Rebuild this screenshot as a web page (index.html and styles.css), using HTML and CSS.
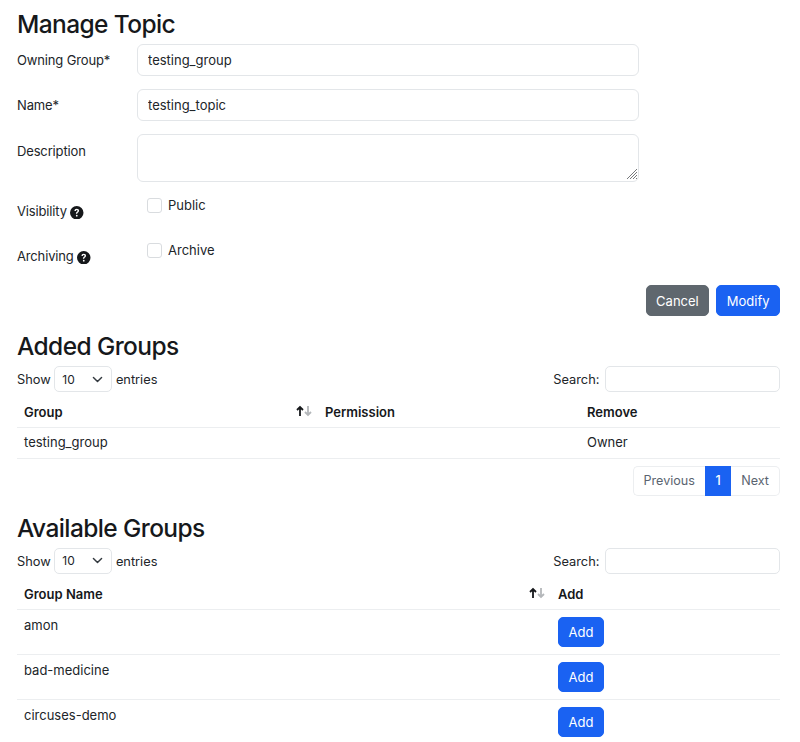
FILE: index.html
```html
<!DOCTYPE html>
<html lang="en">
<head>
<meta charset="UTF-8">
<title>Manage Topic</title>
<link rel="stylesheet" href="styles.css">
</head>
<body>
  <div class="container">
    <h3 class="title">Manage Topic</h3>
    <form class="topic-form">
      <div class="form-row">
        <label class="form-label">Owning Group*</label>
        <input class="form-control" type="text" value="testing_group">
      </div>
      <div class="form-row">
        <label class="form-label">Name*</label>
        <input class="form-control" type="text" value="testing_topic">
      </div>
      <div class="form-row">
        <label class="form-label label-desc">Description</label>
        <div class="textarea-wrap">
          <textarea class="form-control form-textarea"></textarea>
          <svg class="grip" viewBox="0 0 12 12"><path d="M11 1L1 11M11 4L4 11M11 7L7 11M11 10L10 11" stroke="#77797c" stroke-width="1" fill="none"/></svg>
        </div>
      </div>
      <div class="form-row check-row">
        <label class="form-label">Visibility
          <svg class="help" viewBox="0 0 16 16"><path d="M16 8A8 8 0 1 1 0 8a8 8 0 0 1 16 0zM5.300 5.800h1.600c.1-.7.500-1.100 1.100-1.100.6 0 1 .3 1 .9 0 .5-.2.7-.8 1.200-.8.500-1.200 1.100-1.200 2v.5h1.600v-.4c0-.6.2-.8.900-1.300.7-.5 1.200-1.100 1.200-2.100 0-1.500-1.200-2.300-2.700-2.300-1.600 0-2.700 1-2.700 2.600zM8 12.500a1.050 1.050 0 1 0 0-2.100 1.050 1.050 0 0 0 0 2.100z"/></svg>
        </label>
        <div class="check"><span class="checkbox"></span><span>Public</span></div>
      </div>
      <div class="form-row check-row">
        <label class="form-label">Archiving
          <svg class="help" viewBox="0 0 16 16"><path d="M16 8A8 8 0 1 1 0 8a8 8 0 0 1 16 0zM5.300 5.800h1.600c.1-.7.500-1.100 1.100-1.100.6 0 1 .3 1 .9 0 .5-.2.7-.8 1.200-.8.500-1.200 1.100-1.200 2v.5h1.600v-.4c0-.6.2-.8.900-1.300.7-.5 1.200-1.100 1.200-2.100 0-1.500-1.200-2.300-2.700-2.300-1.600 0-2.700 1-2.700 2.600zM8 12.500a1.050 1.050 0 1 0 0-2.100 1.050 1.050 0 0 0 0 2.100z"/></svg>
        </label>
        <div class="check"><span class="checkbox"></span><span>Archive</span></div>
      </div>
      <div class="form-actions">
        <button type="button" class="btn btn-secondary">Cancel</button>
        <button type="button" class="btn btn-primary">Modify</button>
      </div>
    </form>

    <h3 class="title section-title">Added Groups</h3>
    <div class="dt-top">
      <div class="dt-length">Show <span class="select">10<svg viewBox="0 0 16 16"><path d="M3 5.500l5 5 5-5" fill="none" stroke="#343a40" stroke-width="1.800" stroke-linecap="round" stroke-linejoin="round"/></svg></span> entries</div>
      <div class="dt-search">Search: <input class="search-input" type="text"></div>
    </div>
    <table class="table">
      <thead>
        <tr>
          <th class="col-group sortable">Group<svg class="sort" viewBox="0 0 16 12"><path class="sort-up" d="M4 11V2M1 5l3-3 3 3"/><path class="sort-down" d="M12 1v9M9 7l3 3 3-3"/></svg></th>
          <th class="col-perm">Permission</th>
          <th>Remove</th>
        </tr>
      </thead>
      <tbody>
        <tr><td>testing_group</td><td></td><td>Owner</td></tr>
      </tbody>
    </table>
    <div class="pagination">
      <span class="page-link page-prev">Previous</span>
      <span class="page-link page-active">1</span>
      <span class="page-link page-next">Next</span>
    </div>

    <h3 class="title section-title available-title">Available Groups</h3>
    <div class="dt-top">
      <div class="dt-length">Show <span class="select">10<svg viewBox="0 0 16 16"><path d="M3 5.500l5 5 5-5" fill="none" stroke="#343a40" stroke-width="1.800" stroke-linecap="round" stroke-linejoin="round"/></svg></span> entries</div>
      <div class="dt-search">Search: <input class="search-input" type="text"></div>
    </div>
    <table class="table table-available">
      <thead>
        <tr>
          <th class="col-name sortable">Group Name<svg class="sort" viewBox="0 0 16 12"><path class="sort-up" d="M4 11V2M1 5l3-3 3 3"/><path class="sort-down" d="M12 1v9M9 7l3 3 3-3"/></svg></th>
          <th>Add</th>
        </tr>
      </thead>
      <tbody>
        <tr><td>amon</td><td><button type="button" class="btn btn-primary">Add</button></td></tr>
        <tr><td>bad-medicine</td><td><button type="button" class="btn btn-primary">Add</button></td></tr>
        <tr><td>circuses-demo</td><td><button type="button" class="btn btn-primary">Add</button></td></tr>
      </tbody>
    </table>
  </div>
</body>
</html>
```

FILE: styles.css
```css
html, body {
  height: 742px;
  overflow: hidden;
}
body {
  font-family: Inter, "Liberation Sans", sans-serif;
  font-size: 13px;
  color: #212529;
  margin: 0;
  padding: 0;
  background-color: #fff;
}
.container {
  padding: 8px 20px 0 17px;
}
.title {
  font-size: 24.500px;
  font-weight: 500;
  line-height: 32px;
  letter-spacing: -0.6px;
  margin: 0 0 4px;
  color: #16181b;
}
.form-row {
  display: flex;
  align-items: flex-start;
  width: 622px;
  margin-bottom: 13px;
}
.form-label {
  width: 120px;
  flex: none;
  line-height: 20px;
  padding-top: 6px;
  letter-spacing: -0.15px;
}
.label-desc {
  padding-top: 7px;
}
.form-control {
  flex: 1;
  height: 32px;
  box-sizing: border-box;
  border: 1px solid #e3e6e9;
  border-radius: 6px;
  padding: 0 10px;
  font: inherit;
  color: #212529;
  background-color: #fff;
}
.textarea-wrap {
  flex: 1;
  position: relative;
}
.form-textarea {
  width: 100%;
  height: 48px;
  display: block;
  resize: none;
}
.grip {
  position: absolute;
  right: 1px;
  bottom: 2px;
  width: 12px;
  height: 12px;
}
.check-row {
  height: 32px;
}
.help {
  width: 13.500px;
  height: 13.500px;
  vertical-align: -3px;
  fill: #16181b;
}
.check {
  display: flex;
  align-items: center;
  padding-left: 10px;
  height: 20px;
  gap: 6px;
}
.checkbox {
  width: 13px;
  height: 13px;
  border: 1px solid #d9dcdf;
  border-radius: 3px;
  display: block;
}
.form-actions {
  display: flex;
  justify-content: flex-end;
  gap: 7px;
}
.btn {
  font: inherit;
  height: 31px;
  padding: 0 9.500px;
  border-radius: 5px;
  color: #fff;
  box-sizing: border-box;
}
.btn-primary {
  background-color: #1a62f2;
  border: 1px solid #1a62f2;
}
.btn-secondary {
  background-color: #5f676e;
  border: 1px solid #5f676e;
}
.section-title {
  margin: 14px 0 4px;
}
.available-title {
  margin-top: 16px;
}
.dt-top {
  display: flex;
  justify-content: space-between;
  align-items: center;
  height: 26px;
  margin-bottom: 6px;
  font-size: 12.800px;
}
.select {
  display: inline-flex;
  align-items: center;
  justify-content: space-between;
  box-sizing: border-box;
  width: 58px;
  height: 26px;
  border: 1px solid #e3e6e9;
  border-radius: 5px;
  padding: 0 7px;
  font-size: 12px;
}
.select svg {
  width: 13px;
  height: 13px;
}
.search-input {
  box-sizing: border-box;
  width: 175px;
  height: 26px;
  border: 1px solid #e3e6e9;
  border-radius: 5px;
  margin-left: 2px;
}
.table {
  width: 100%;
  border-collapse: collapse;
  table-layout: fixed;
}
.table th {
  text-align: left;
  font-weight: 600;
  height: 29px;
  padding: 0 7px 1px;
  border-bottom: 1px solid #eceef0;
  color: #16181b;
  box-sizing: border-box;
}
.table td {
  height: 29px;
  padding: 0 7px 1px;
  border-bottom: 1px solid #eceef0;
}
.col-group {
  width: 301px;
}
.col-perm {
  width: 262px;
}
.sortable {
  position: relative;
}
.sort {
  position: absolute;
  right: 6px;
  top: 7px;
  width: 16px;
  height: 12px;
  fill: none;
  stroke-width: 1.800;
}
.sort-up {
  stroke: #16181b;
}
.sort-down {
  stroke: #b4b7ba;
}
.pagination {
  display: flex;
  justify-content: flex-end;
  margin-top: 7px;
  height: 30px;
  line-height: 28px;
  font-size: 12.600px;
  color: #5a6470;
}
.page-link {
  box-sizing: border-box;
  border: 1px solid #eceef0;
  padding: 0 10px;
}
.page-prev {
  border-radius: 5px 0 0 5px;
  border-right: none;
}
.page-next {
  border-radius: 0 5px 5px 0;
  border-left: none;
}
.page-active {
  background-color: #1a62f2;
  border-color: #1a62f2;
  color: #fff;
  font-weight: 500;
  padding: 0 9.500px;
}
.col-name {
  width: 534px;
}
.table-available th {
  height: 30px;
  padding-bottom: 1px;
}
.table-available td {
  height: 45px;
  vertical-align: top;
  padding-top: 7px;
  box-sizing: border-box;
}
.table-available .btn {
  display: block;
  height: 30px;
}
```
